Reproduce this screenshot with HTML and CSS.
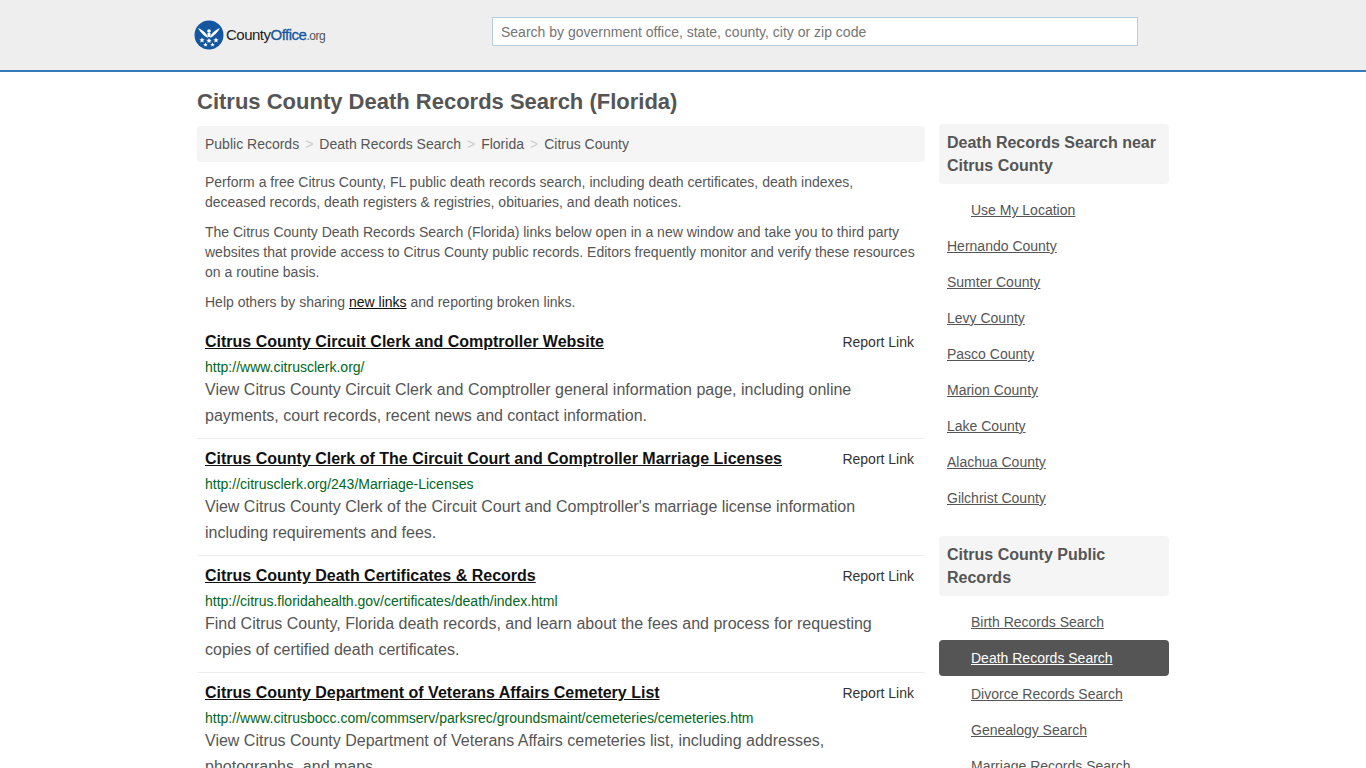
FILE: index.html
```html
<!DOCTYPE html>
<html lang="en">
<head>
    <meta charset="UTF-8">
    <title>Citrus County Death Records Search (Florida)</title>
    <link rel="stylesheet" href="styles.css">
</head>
<body>
    <div class="header">
        <div class="wrap header-row">
            <a class="logo" href="#">
                <svg class="logo-mark" width="30" height="30" viewBox="0 0 30 30">
                    <circle cx="15" cy="15" r="14.5" fill="#14569f"/>
                    <path d="M4 8 C7 9 10 11 13 15 L14 18 C10 16 6 12 4 8Z M26 8 C23 9 20 11 17 15 L16 18 C20 16 24 12 26 8Z" fill="#fff"/>
                    <circle cx="15" cy="11" r="1.8" fill="#fff"/>
                    <path d="M13.5 13h3v4h-3z" fill="#fff"/>
                    <path d="M8 17.5l.8 1.8 1.9.1-1.5 1.2.5 1.9-1.7-1-1.7 1 .5-1.9-1.5-1.2 1.9-.1zM15 18l.8 1.8 1.9.1-1.5 1.2.5 1.9-1.7-1-1.7 1 .5-1.9-1.5-1.2 1.9-.1zM22 17.5l.8 1.8 1.9.1-1.5 1.2.5 1.9-1.7-1-1.7 1 .5-1.9-1.5-1.2 1.9-.1zM11.500 22.500l.7 1.400 1.500.1-1.200 1 .4 1.500-1.400-.8-1.400.8.4-1.500-1.200-1 1.500-.1zM18.500 22.500l.7 1.400 1.500.1-1.200 1 .4 1.500-1.400-.8-1.400.8.4-1.500-1.200-1 1.500-.1z" fill="#fff"/>
                </svg>
                <span class="logo-text">County<b>Office</b><small>.org</small></span>
            </a>
            <input class="search" type="text" placeholder="Search by government office, state, county, city or zip code">
        </div>
    </div>

    <div class="wrap">
        <h1>Citrus County Death Records Search (Florida)</h1>
        <div class="columns">
            <div class="main">
                <div class="breadcrumb">
                    <a href="#">Public Records</a><span>&gt;</span><a href="#">Death Records Search</a><span>&gt;</span><a href="#">Florida</a><span>&gt;</span><a href="#">Citrus County</a>
                </div>
                <div class="intro">
                    <p>Perform a free Citrus County, FL public death records search, including death certificates, death indexes, deceased records, death registers &amp; registries, obituaries, and death notices.</p>
                    <p>The Citrus County Death Records Search (Florida) links below open in a new window and take you to third party websites that provide access to Citrus County public records. Editors frequently monitor and verify these resources on a routine basis.</p>
                    <p>Help others by sharing <a href="#">new links</a> and reporting broken links.</p>
                </div>

                <div class="result">
                    <div class="result-top">
                        <a class="result-title" href="#">Citrus County Circuit Clerk and Comptroller Website</a>
                        <a class="report" href="#">Report Link</a>
                    </div>
                    <div class="result-url">http://www.citrusclerk.org/</div>
                    <div class="result-desc">View Citrus County Circuit Clerk and Comptroller general information page, including online payments, court records, recent news and contact information.</div>
                </div>
                <div class="result">
                    <div class="result-top">
                        <a class="result-title" href="#">Citrus County Clerk of The Circuit Court and Comptroller Marriage Licenses</a>
                        <a class="report" href="#">Report Link</a>
                    </div>
                    <div class="result-url">http://citrusclerk.org/243/Marriage-Licenses</div>
                    <div class="result-desc">View Citrus County Clerk of the Circuit Court and Comptroller's marriage license information including requirements and fees.</div>
                </div>
                <div class="result">
                    <div class="result-top">
                        <a class="result-title" href="#">Citrus County Death Certificates &amp; Records</a>
                        <a class="report" href="#">Report Link</a>
                    </div>
                    <div class="result-url">http://citrus.floridahealth.gov/certificates/death/index.html</div>
                    <div class="result-desc">Find Citrus County, Florida death records, and learn about the fees and process for requesting copies of certified death certificates.</div>
                </div>
                <div class="result">
                    <div class="result-top">
                        <a class="result-title" href="#">Citrus County Department of Veterans Affairs Cemetery List</a>
                        <a class="report" href="#">Report Link</a>
                    </div>
                    <div class="result-url">http://www.citrusbocc.com/commserv/parksrec/groundsmaint/cemeteries/cemeteries.htm</div>
                    <div class="result-desc">View Citrus County Department of Veterans Affairs cemeteries list, including addresses, photographs, and maps.</div>
                </div>
            </div>

            <div class="side">
                <h2 class="side-head">Death Records Search near Citrus County</h2>
                <ul class="side-list">
                    <li class="indent"><a href="#">Use My Location</a></li>
                    <li><a href="#">Hernando County</a></li>
                    <li><a href="#">Sumter County</a></li>
                    <li><a href="#">Levy County</a></li>
                    <li><a href="#">Pasco County</a></li>
                    <li><a href="#">Marion County</a></li>
                    <li><a href="#">Lake County</a></li>
                    <li><a href="#">Alachua County</a></li>
                    <li><a href="#">Gilchrist County</a></li>
                </ul>
                <h2 class="side-head">Citrus County Public Records</h2>
                <ul class="side-list">
                    <li class="indent"><a href="#">Birth Records Search</a></li>
                    <li class="indent active"><a href="#">Death Records Search</a></li>
                    <li class="indent"><a href="#">Divorce Records Search</a></li>
                    <li class="indent"><a href="#">Genealogy Search</a></li>
                    <li class="indent"><a href="#">Marriage Records Search</a></li>
                </ul>
            </div>
        </div>
    </div>
</body>
</html>
```
FILE: styles.css
```css
html, body {
    height: 768px;
    overflow: hidden;
}

body {
    margin: 0;
    font-family: "Liberation Sans", Arial, sans-serif;
    font-size: 14px;
    line-height: 20px;
    color: #555;
    background: #fff;
}

a {
    color: inherit;
}

.wrap {
    width: 972px;
    margin: 0 auto;
}

.header {
    height: 70px;
    background: #eee;
    border-bottom: 2px solid #337ab7;
}

.header-row {
    display: flex;
    align-items: flex-start;
    position: relative;
    left: -3px;
}

.logo {
    display: flex;
    align-items: center;
    gap: 2px;
    width: 298px;
    margin-top: 20px;
    text-decoration: none;
}

.logo-text {
    font-size: 15px;
    letter-spacing: -0.5px;
    color: #222;
}

.logo-text b {
    font-weight: 400;
    color: #14569f;
    -webkit-text-stroke: 0.3px #14569f;
}

.logo-text small {
    font-size: 12px;
    color: #555;
}

.search {
    width: 646px;
    height: 29px;
    box-sizing: border-box;
    margin-top: 17px;
    padding: 0 8px;
    border: 1px solid #b5cde0;
    font-family: inherit;
    font-size: 14px;
    color: #555;
    background: #fff;
}

.search::placeholder {
    color: #757575;
    opacity: 1;
}

h1 {
    margin: 17px 0 11px;
    font-size: 22px;
    line-height: 26px;
    font-weight: bold;
    color: #555;
}

.columns {
    display: flex;
    align-items: flex-start;
    gap: 14px;
}

.main {
    width: 728px;
}

.side {
    width: 230px;
    margin-top: -2px;
}

.breadcrumb {
    height: 36px;
    padding: 0 8px;
    display: flex;
    align-items: center;
    background: #f5f5f5;
    border-radius: 4px;
}

.breadcrumb a {
    text-decoration: none;
}

.breadcrumb span {
    margin: 0 6px;
    color: #ccc;
}

.intro {
    padding: 0 8px;
    margin-top: 10px;
}

.intro p {
    margin: 0 0 10px;
}

.intro a {
    color: #111;
}

.result {
    padding: 10px 8px 9px;
    border-bottom: 1px solid #eee;
}

.intro + .result {
    padding-top: 10px;
}

.result:last-child {
    border-bottom: 0;
}

.result-top {
    display: flex;
    justify-content: space-between;
    align-items: center;
}

.result-title {
    font-size: 16px;
    font-weight: bold;
    color: #111;
}

.report {
    margin-right: 3px;
    color: #333;
    text-decoration: none;
}

.result-url {
    margin-top: 5px;
    color: #006621;
}

.result-desc {
    font-size: 16px;
    line-height: 26px;
}

.side-head {
    margin: 0;
    padding: 7px 8px;
    font-size: 16px;
    line-height: 23px;
    font-weight: bold;
    background: #f5f5f5;
    border-radius: 4px;
}

.side-list {
    list-style: none;
    margin: 8px 0 20px;
    padding: 0;
}

.side-list li {
    height: 36px;
    padding: 0 8px;
    display: flex;
    align-items: center;
    border-radius: 4px;
}

.side-list li.indent {
    padding-left: 32px;
}

.side-list li.active {
    background: #555;
    color: #fff;
}
```
